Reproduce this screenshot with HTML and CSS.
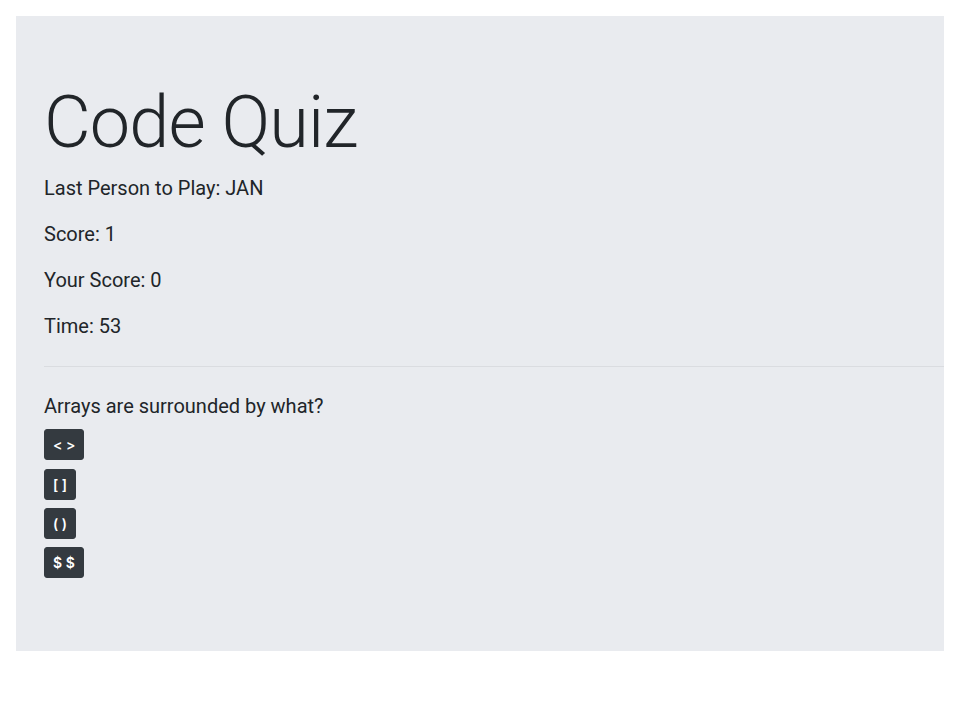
FILE: index.html
```html
<!DOCTYPE html>
<html lang="en">
<head>
<meta charset="utf-8">
<title>Code Quiz</title>
<link rel="stylesheet" href="styles.css">
</head>
<body>
<div class="jumbotron">
  <h1 class="title">Code Quiz</h1>
  <p class="lead">Last Person to Play: JAN</p>
  <p class="lead">Score: 1</p>
  <p class="lead">Your Score: 0</p>
  <p class="lead">Time: 53</p>
  <hr class="divider">
  <p class="lead question">Arrays are surrounded by what?</p>
  <div class="answers">
    <button class="btn">&lt; &gt;</button>
    <button class="btn">[ ]</button>
    <button class="btn">( )</button>
    <button class="btn">$ $</button>
  </div>
</div>
</body>
</html>
```
FILE: styles.css
```css
html, body {
  margin: 0;
  padding: 0;
  background: #ffffff;
}
body {
  padding: 16px;
  font-family: Roboto, "Noto Sans", sans-serif;
  color: #212529;
}
.jumbotron {
  background: #e9ebef;
  padding: 64px 0 73px 28px;
}
.title {
  margin: 0 0 7px;
  font-size: 72px;
  font-weight: 300;
  line-height: 1.2;
  letter-spacing: -0.9px;
}
.lead {
  margin: 0 0 16px;
  font-size: 20px;
  line-height: 30px;
  font-weight: 400;
}
.divider {
  margin: 25px 0 24px;
  border: 0;
  border-top: 1px solid #dadce0;
  height: 0;
}
.question {
  margin-bottom: 8px;
}
.answers {
  display: flex;
  flex-direction: column;
  align-items: flex-start;
  gap: 8.3px;
}
.btn {
  font-family: Inter, "Noto Sans", sans-serif;
  font-size: 14px;
  font-weight: 600;
  line-height: 21px;
  padding: 4px 8px;
  border: 1px solid #343a40;
  border-radius: 3px;
  background: #343a40;
  color: #ffffff;
  cursor: pointer;
}
```
